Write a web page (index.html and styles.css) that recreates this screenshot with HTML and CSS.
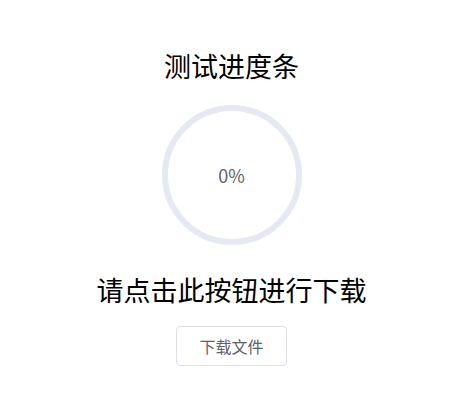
FILE: index.html
```html
<!DOCTYPE html>
<html lang="zh-CN">
<head>
    <meta charset="UTF-8">
    <title>测试进度条</title>
    <link rel="stylesheet" href="styles.css">
</head>
<body>
    <div class="pagina">
        <h2 class="titulo">测试进度条</h2>

        <!-- 进度圈 -->
        <div class="progreso">
            <svg viewBox="0 0 100 100" width="140" height="140">
                <path class="pista" d="M 50 50 m 0 -47.857 a 47.857 47.857 0 1 1 0 95.714 a 47.857 47.857 0 1 1 0 -95.714" fill="none" stroke-width="4.286"></path>
            </svg>
            <div class="progreso-texto">0%</div>
        </div>

        <h2 class="titulo titulo-descarga">请点击此按钮进行下载</h2>
        <button class="boton" type="button">下载文件</button>
    </div>
</body>
</html>
```

FILE: styles.css
```css
* {
    margin: 0;
    padding: 0;
    box-sizing: border-box;
    font-family: "Noto Sans CJK SC", "Noto Sans", sans-serif;
}

body {
    background: #fff;
    color: #000;
}

.pagina {
    display: flex;
    flex-direction: column;
    align-items: center;
    padding-top: 46px;
    padding-right: 4px;
}

.titulo {
    font-size: 27px;
    font-weight: normal;
    line-height: 40px;
}

.progreso {
    position: relative;
    width: 140px;
    height: 140px;
    margin-top: 19px;
}

.progreso svg {
    display: block;
}

.pista {
    stroke: #e5e9f2;
}

.progreso-texto {
    position: absolute;
    top: 50%;
    left: 0;
    width: 100%;
    transform: translateY(-50%);
    text-align: center;
    font-size: 18px;
    color: #606266;
    line-height: 1;
}

.titulo-descarga {
    margin-top: 25px;
}

.boton {
    margin-top: 16px;
    height: 40px;
    padding: 0 22px;
    background: #fff;
    border: 1px solid #dcdfe6;
    border-radius: 4px;
    color: #606266;
    font-size: 16px;
    cursor: pointer;
}
```
